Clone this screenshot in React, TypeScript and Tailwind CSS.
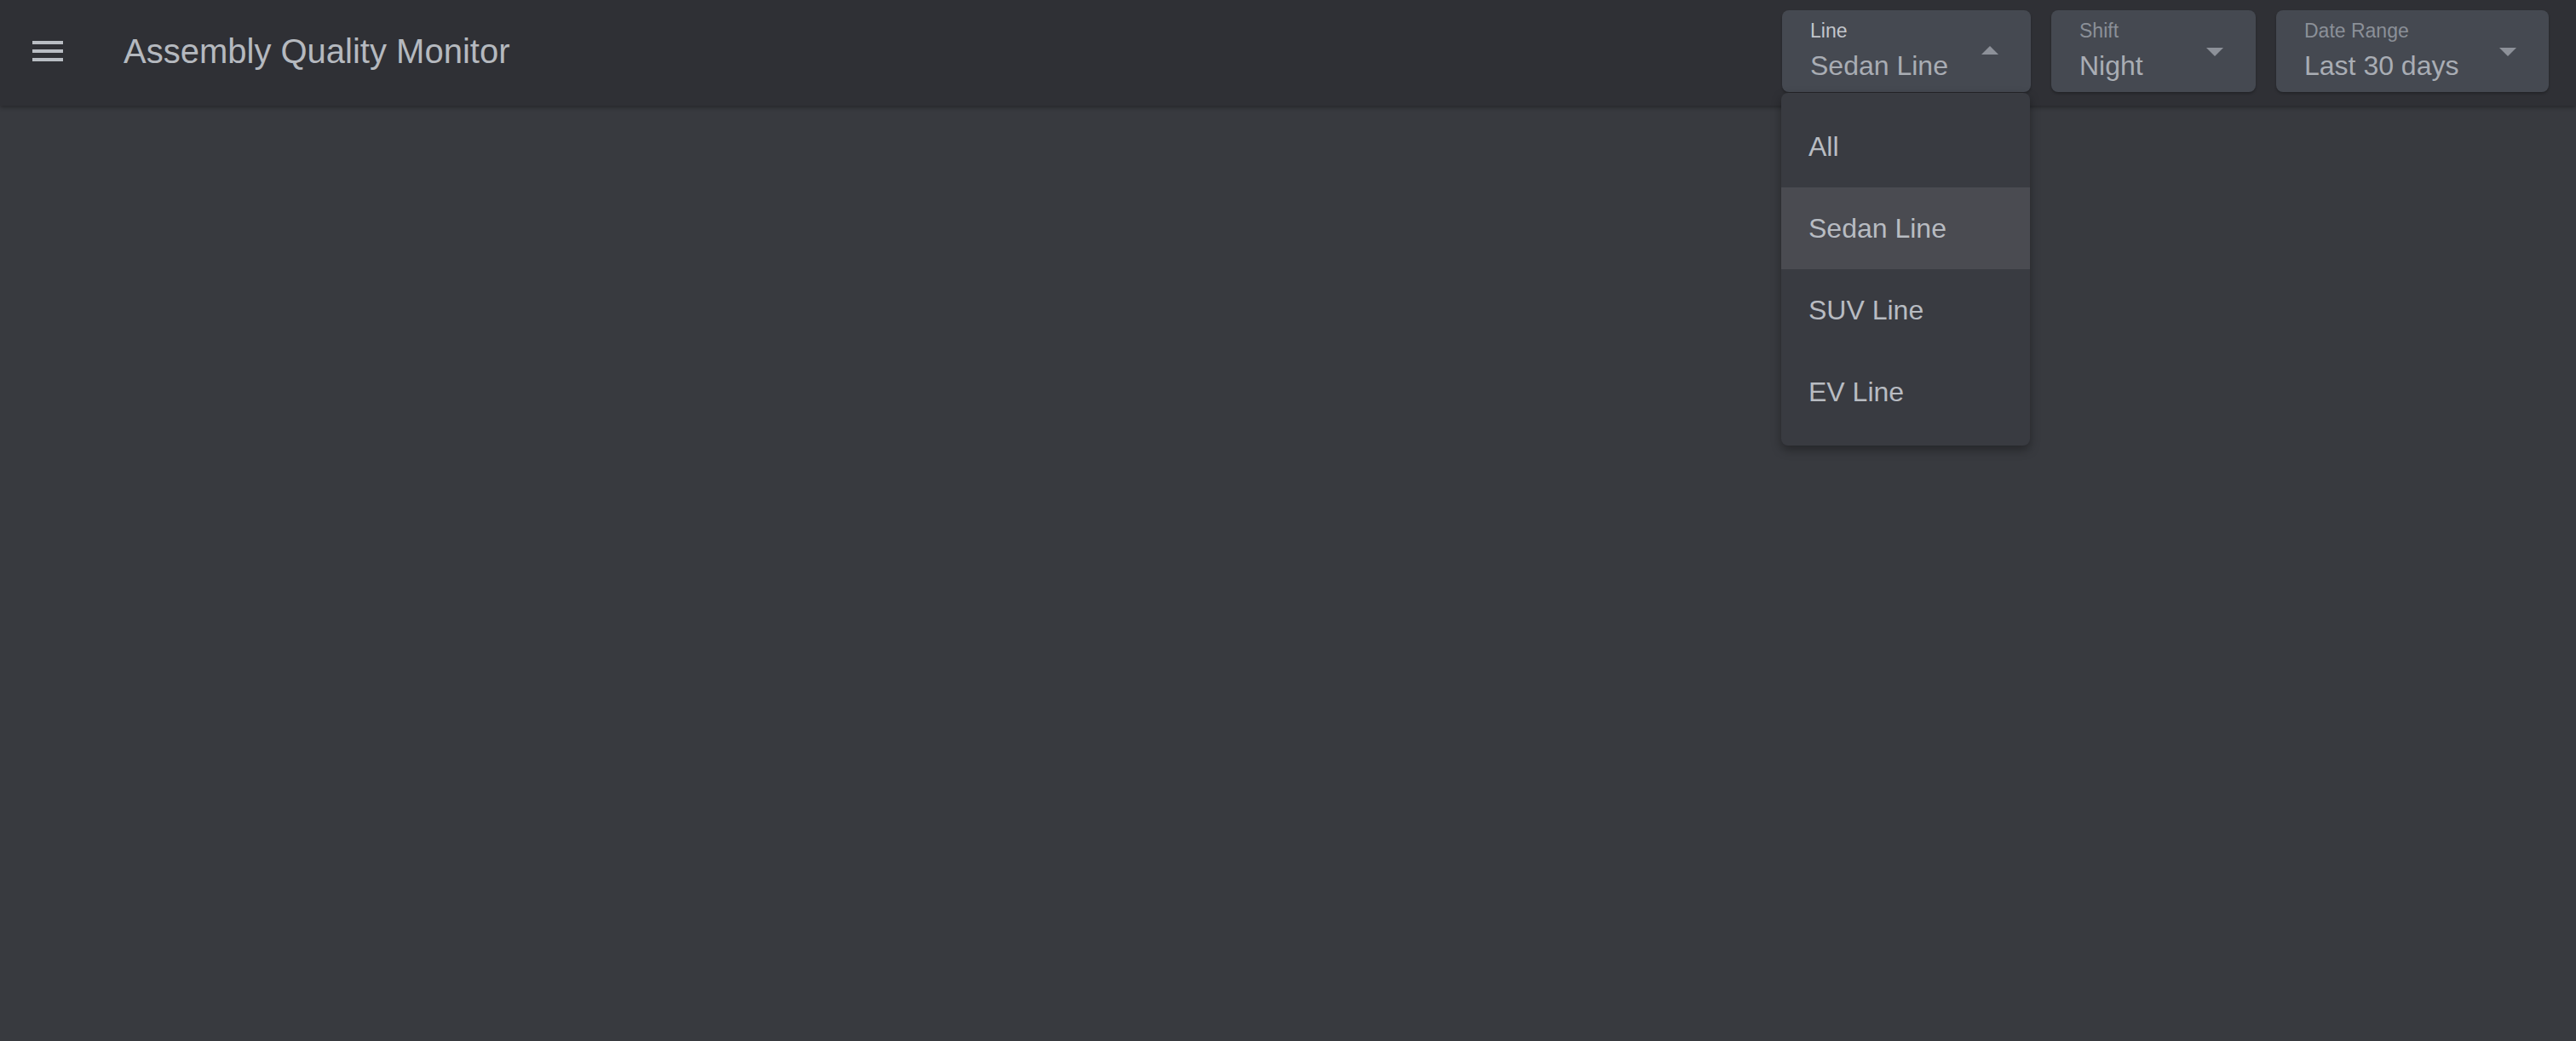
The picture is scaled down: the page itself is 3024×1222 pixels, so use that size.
import React from "react";

function Arrow({ up }: { up?: boolean }) {
  return (
    <svg
      viewBox="0 0 20 10"
      className={up ? "w-[20px] h-[10px] -mt-[2px] shrink-0" : "w-[20px] h-[10px] mt-[2px] shrink-0"}
    >
      {up ? <path d="M0 10 L10 0 L20 10 Z" fill="#8d9199" /> : <path d="M0 0 L20 0 L10 10 Z" fill="#8d9199" />}
    </svg>
  );
}

function SelectBox({
  label,
  value,
  width,
  focused,
  children,
}: {
  label: string;
  value: string;
  width: string;
  focused?: boolean;
  children?: React.ReactNode;
}) {
  return (
    <div className={`relative ${width}`}>
      <div className="h-[96px] rounded-[8px] bg-[#454951] flex items-center pr-[38px] shadow-[0_2px_3px_rgba(0,0,0,0.25)]">
        <div className="flex-1 self-stretch flex flex-col pt-[12px] pl-[33px]">
          <div
            className={
              focused
                ? "text-[23px] leading-[24px] text-[#c3c6cc]"
                : "text-[23px] leading-[24px] text-[#8b9098]"
            }
          >
            {label}
          </div>
          <div className="mt-[11px] text-[32px] leading-[36px] text-[#a9adb4] whitespace-nowrap">{value}</div>
        </div>
        <Arrow up={focused} />
      </div>
      {children}
    </div>
  );
}

export default function App() {
  const items = ["All", "Sedan Line", "SUV Line", "EV Line"];
  return (
    <div
      className="w-full h-[1222px] bg-[#383a3f] overflow-hidden"
      style={{ fontFamily: '"Liberation Sans", Arial, sans-serif' }}
    >
      <header className="relative z-10 h-[124px] bg-[#2f3035] flex items-center pb-[4px] shadow-[0_2px_5px_rgba(0,0,0,0.35)]">
        <svg viewBox="0 0 24 24" className="ml-[32px] w-[48px] h-[48px] shrink-0">
          <path d="M3 18h18v-2H3zm0-5h18v-2H3zm0-7v2h18V6z" fill="#b9bdc3" />
        </svg>
        <h1 className="ml-[65px] text-[40px] leading-[48px] font-normal text-[#b5b9bf] whitespace-nowrap">
          Assembly Quality Monitor
        </h1>
        <div className="ml-auto mr-[32px] flex gap-6">
          <SelectBox label="Line" value="Sedan Line" width="w-[292px]" focused>
            <div className="absolute left-[-1px] top-[97px] w-[292px] rounded-[8px] bg-[#393b41] py-[15px] shadow-[0_5px_12px_rgba(0,0,0,0.35)]">
              {items.map((it) => (
                <div
                  key={it}
                  className={
                    it === "Sedan Line"
                      ? "h-[96px] flex items-center pl-[32px] bg-[#4a4b51] text-[32px] leading-[48px] text-[#b8bcc2]"
                      : "h-[96px] flex items-center pl-[32px] text-[32px] leading-[48px] text-[#b8bcc2]"
                  }
                >
                  {it}
                </div>
              ))}
            </div>
          </SelectBox>
          <SelectBox label="Shift" value="Night" width="w-[240px]" />
          <SelectBox label="Date Range" value="Last 30 days" width="w-[320px]" />
        </div>
      </header>
    </div>
  );
}
